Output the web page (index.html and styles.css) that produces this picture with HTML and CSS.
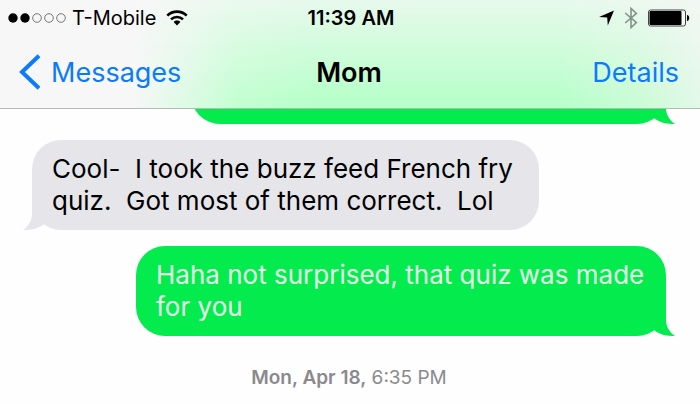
FILE: index.html
```html
<!DOCTYPE html>
<html lang="en">
<head>
    <meta charset="UTF-8">
    <meta name="viewport" content="width=device-width, initial-scale=1.0">
    <title>Messages - Mom</title>
    <link rel="stylesheet" href="styles.css">
</head>
<body>
    <header class="header">
        <div class="status-bar">
            <div class="status-left">
                <svg class="signal" width="58" height="12" viewBox="0 0 58 12" aria-hidden="true">
                    <circle cx="5" cy="6" r="4.7"/>
                    <circle cx="17" cy="6" r="4.7"/>
                    <circle class="signal-off" cx="29" cy="6" r="4.3"/>
                    <circle class="signal-off" cx="41" cy="6" r="4.3"/>
                    <circle class="signal-off" cx="53" cy="6" r="4.3"/>
                </svg>
                <span class="carrier">T-Mobile</span>
                <svg class="wifi" width="22" height="16" viewBox="0 0 22 16" aria-hidden="true">
                    <path class="wifi-arc" d="M1.3 5.6C6.6 0.3 15.4 0.3 20.7 5.6"/>
                    <path class="wifi-arc" d="M5 9.4C8.3 6.1 13.7 6.1 17 9.4"/>
                    <path d="M7.6 12C9.5 10.1 12.5 10.1 14.4 12L11 15.4Z"/>
                </svg>
            </div>
            <time class="clock">11:39 AM</time>
            <div class="status-right">
                <svg width="15" height="16" viewBox="0 0 15 16" aria-hidden="true">
                    <path d="M15 0.5L8.8 15.5L8.2 7.4L0 7Z"/>
                </svg>
                <svg class="bluetooth" width="14" height="22" viewBox="0 0 14 22" aria-hidden="true">
                    <path d="M1.2 6L12.4 15.6L7 20.6V1.4L12.4 6.4L1.2 16"/>
                </svg>
                <svg class="battery" width="42" height="18" viewBox="0 0 42 18" aria-hidden="true">
                    <rect class="battery-shell" x="0.5" y="1" width="37" height="16" rx="2"/>
                    <rect x="1.5" y="2" width="32" height="14" rx="1"/>
                    <path d="M39 6C42 6 42 12 39 12Z"/>
                </svg>
            </div>
        </div>
        <nav class="nav-bar">
            <a class="back" href="#">
                <svg width="22" height="36" viewBox="0 0 22 36" aria-hidden="true">
                    <path d="M20 1.8L3 18L20 34.2"/>
                </svg>
                Messages
            </a>
            <h1 class="title">Mom</h1>
            <a class="details" href="#">Details</a>
        </nav>
    </header>

    <main class="thread">
        <div class="bubble sent previous">
            <svg class="tail" width="24" height="30" viewBox="0 0 24 30" aria-hidden="true">
                <path d="M0 0H15V14C15 20 18 26 24 30C16 30 9 29 3 24L0 22Z"/>
            </svg>
        </div>
        <div class="bubble received">
            <p>Cool-  I took the buzz feed French fry quiz.  Got most of them correct.  Lol</p>
            <svg class="tail" width="24" height="30" viewBox="0 0 24 30" aria-hidden="true">
                <path d="M0 0H15V14C15 20 18 26 24 30C16 30 9 29 3 24L0 22Z"/>
            </svg>
        </div>
        <div class="bubble sent">
            <p>Haha not surprised, that quiz was made for you</p>
            <svg class="tail" width="24" height="30" viewBox="0 0 24 30" aria-hidden="true">
                <path d="M0 0H15V14C15 20 18 26 24 30C16 30 9 29 3 24L0 22Z"/>
            </svg>
        </div>
        <time class="timestamp"><b>Mon, Apr 18,</b> 6:35 PM</time>
    </main>
</body>
</html>
```
FILE: styles.css
```css
* {
    box-sizing: border-box;
}

body {
    margin: 0;
    background-color: #fefefe;
    color: #000;
    font-family: Inter, "Liberation Sans", sans-serif;
}

p, h1 {
    margin: 0;
}

svg {
    display: block;
    flex-shrink: 0;
}

a {
    color: #0a7aff;
    text-decoration: none;
}

.header {
    position: relative;
    z-index: 1;
    border-bottom: 1px solid rgba(0, 0, 0, 0.25);
    background:
        linear-gradient(to bottom, rgba(247, 247, 247, 0.75), rgba(247, 247, 247, 0) 90%),
        linear-gradient(to right, #f7f7f7 19%, #e0fae7 26%, #c4ffd2 34%, #b9ffcb 45%, #b9ffcb 80%, #cdfbd8 92%, #e4f8e9);
}

.status-bar,
.nav-bar {
    display: grid;
    grid-template-columns: 1fr auto 1fr;
    align-items: center;
}

.status-bar {
    height: 36px;
    padding: 0 10px 0 8px;
    font-size: 20px;
}

.status-left,
.status-right {
    display: flex;
    align-items: center;
}

.status-left {
    gap: 6px;
}

.status-right {
    justify-content: flex-end;
    gap: 10px;
}

.signal-off {
    fill: none;
    stroke: #555;
    stroke-width: 0.8;
}

.wifi {
    margin-left: 4px;
}

.wifi-arc {
    fill: none;
    stroke: #000;
    stroke-width: 2.6;
}

.clock {
    padding-left: 4px;
    font-weight: 600;
}

.bluetooth {
    fill: none;
    stroke: #84948a;
    stroke-width: 1.6;
}

.battery-shell {
    fill: #f4fbf6;
    stroke: #444;
}

.nav-bar {
    height: 72px;
    padding: 0 21px 0 19px;
    font-size: 27px;
}

.back {
    display: flex;
    align-items: center;
    gap: 10px;
}

.back path {
    fill: none;
    stroke: #0a7aff;
    stroke-width: 4;
}

.title {
    font-size: 27px;
    font-weight: 600;
}

.details {
    justify-self: end;
}

.thread {
    display: flex;
    flex-direction: column;
    gap: 16px;
    padding: 0 34px 12px 32px;
}

.bubble {
    position: relative;
    padding: 13px 20px;
    border-radius: 29px;
    font-size: 26px;
    line-height: 32px;
}

.bubble p {
    white-space: pre-wrap;
}

.received {
    align-self: flex-start;
    max-width: 80%;
    background-color: #e5e5ea;
    color: #000;
    fill: #e5e5ea;
}

.sent {
    align-self: flex-end;
    max-width: 530px;
    background-color: #04eb4e;
    color: #e6ffe9;
    fill: #04eb4e;
}

/* Older message, scrolled up under the header */
.previous {
    width: 75%;
    height: 60px;
    margin-top: -45px;
}

.tail {
    position: absolute;
    right: -9px;
    bottom: 0;
}

.received .tail {
    right: auto;
    left: -9px;
    transform: scaleX(-1);
}

.timestamp {
    padding-top: 16px;
    color: #8a8a8e;
    font-size: 19px;
    line-height: 20px;
    text-align: center;
}

.timestamp b {
    font-weight: 600;
}
```
